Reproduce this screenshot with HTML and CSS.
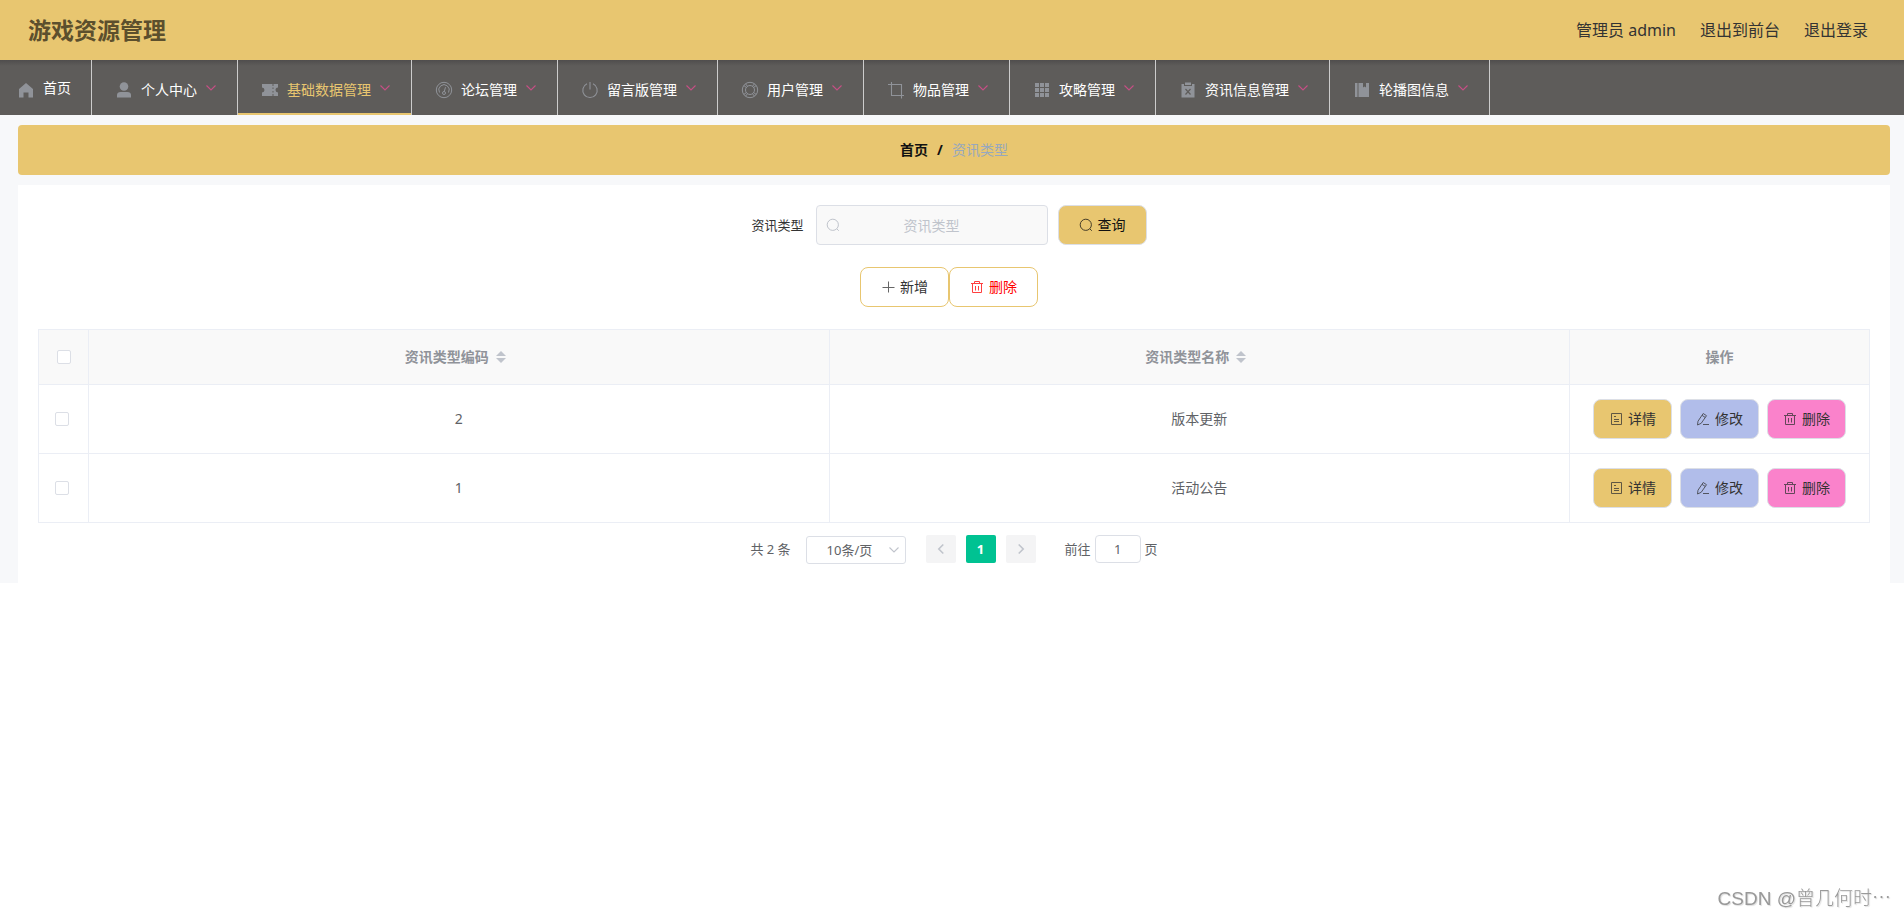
FILE: index.html
```html
<!DOCTYPE html>
<html lang="zh-CN">
<head>
<meta charset="utf-8">
<title>游戏资源管理</title>
<link rel="stylesheet" href="styles.css">
</head>
<body>
<svg class="sprite" aria-hidden="true">
  <symbol id="i-home" viewBox="0 0 18 18"><path fill="currentColor" d="M9 2 2 8v8.500h4.500V11.500h5v5H16V8z"/></symbol>
  <symbol id="i-user" viewBox="0 0 18 18"><circle fill="currentColor" cx="9" cy="5.500" r="4.300"/><path fill="currentColor" d="M2 16.500v-2.500c0-2 1.500-3 3.500-3h7c2 0 3.500 1 3.500 3v2.500z"/></symbol>
  <symbol id="i-ticket" viewBox="0 0 18 18"><path fill="currentColor" d="M1 3h10.500v2h1V3H17v3.500a2.500 2.500 0 0 0 0 5V15h-4.500v-2h-1v2H1v-3.500a2.500 2.500 0 0 0 0-5zM11.500 6.500v1.500h1V6.500zm0 3.500v1.500h1V10z"/></symbol>
  <symbol id="i-odometer" viewBox="0 0 18 18"><g fill="none" stroke="currentColor"><circle cx="9" cy="9" r="7.700"/><path d="M4.500 11.500A5.200 5.200 0 1 1 13.500 11.500M9.200 10.800l1.300-4.600"/><circle cx="9" cy="12" r="1.500"/></g></symbol>
  <symbol id="i-power" viewBox="0 0 18 18"><path fill="none" stroke="currentColor" stroke-width="1.100" d="M9 1v7.500M6 2.800a7.200 7.200 0 1 0 6 0"/></symbol>
  <symbol id="i-help" viewBox="0 0 18 18"><g fill="none" stroke="currentColor"><circle cx="9" cy="9" r="7.700"/><circle cx="9" cy="9" r="4.500"/><path d="M4.500 2.800l2 2.500M2.800 4.500l2.600 2M13.500 2.800l-2 2.500M15.200 4.500l-2.600 2M4.500 15.200l2-2.500M2.800 13.500l2.600-2M13.500 15.200l-2-2.500M15.200 13.500l-2.600-2"/></g></symbol>
  <symbol id="i-crop" viewBox="0 0 18 18"><path fill="none" stroke="currentColor" stroke-width="1.100" d="M4.500 1v13.500H17M1 3.500h13.500V17.500"/></symbol>
  <symbol id="i-grid" viewBox="0 0 18 18"><path fill="currentColor" d="M2 2h4v4H2zm5 0h4v4H7zm5 0h4v4h-4zM2 7h4v4H2zm5 0h4v4H7zm5 0h4v4h-4zM2 12h4v4H2zm5 0h4v4H7zm5 0h4v4h-4z"/></symbol>
  <symbol id="i-release" viewBox="0 0 18 18"><path fill="currentColor" d="M2.500 3H5v2h8V3h2.500v13.500h-13zM6 1.500h6V4H6z"/><path fill="none" stroke="#5e5c5a" stroke-width="1.200" d="M6.500 8l5 5.500M11.500 8l-5 5.500"/></symbol>
  <symbol id="i-book" viewBox="0 0 18 18"><path fill="currentColor" d="M2 2h2.500v14H2zM5.500 2H10v4.500l1.500-1L13 6.500V2h3v14H5.500z"/></symbol>
  <symbol id="i-down" viewBox="0 0 12 12"><path fill="none" stroke="currentColor" stroke-width="1.100" d="M1.500 3.500 6 8l4.500-4.500"/></symbol>
  <symbol id="i-left" viewBox="0 0 12 12"><path fill="none" stroke="currentColor" stroke-width="1.600" d="M8.300 1.500 3.800 6l4.500 4.500"/></symbol>
  <symbol id="i-right" viewBox="0 0 12 12"><path fill="none" stroke="currentColor" stroke-width="1.600" d="M3.700 1.500 8.200 6l-4.500 4.500"/></symbol>
  <symbol id="i-search" viewBox="0 0 14 14"><path fill="none" stroke="currentColor" d="M10.800 10.800 12.800 12.800"/><circle fill="none" stroke="currentColor" cx="6.800" cy="6.800" r="5.600"/></symbol>
  <symbol id="i-plus" viewBox="0 0 14 14"><path fill="none" stroke="currentColor" d="M7.500 1.500v11M1.500 7.500h12"/></symbol>
  <symbol id="i-trash" viewBox="0 0 14 14"><path fill="none" stroke="currentColor" d="M1 3.500h12M4.500 3.500v-2h5v2M2.500 3.500v9h9v-9M5.500 6v4.500M8.500 6v4.500"/></symbol>
  <symbol id="i-doc" viewBox="0 0 14 14"><path fill="none" stroke="currentColor" d="M2.500 1.500h10v11h-10zM5 4.500h2M5 7.500h5M5 9.500h5"/></symbol>
  <symbol id="i-edit" viewBox="0 0 14 14"><path fill="none" stroke="currentColor" d="M2 9.200 7.200 1.500l3.300 2.200L5.200 11.300 1.500 13zM6 3.300l3.300 2.200M7 12.500h6"/></symbol>
</svg>

<header class="topbar">
  <h1 class="brand">游戏资源管理</h1>
  <div class="account">
    <span>管理员 admin</span>
    <a href="#">退出到前台</a>
    <a href="#">退出登录</a>
  </div>
</header>

<nav class="nav">
  <a class="nav-item nav-home" href="#"><svg class="nav-icon"><use href="#i-home"/></svg><span class="nav-text">首页</span></a>
  <a class="nav-item" href="#"><svg class="nav-icon"><use href="#i-user"/></svg><span class="nav-text">个人中心</span><svg class="nav-arrow"><use href="#i-down"/></svg></a>
  <a class="nav-item active" href="#"><svg class="nav-icon"><use href="#i-ticket"/></svg><span class="nav-text">基础数据管理</span><svg class="nav-arrow"><use href="#i-down"/></svg></a>
  <a class="nav-item" href="#"><svg class="nav-icon"><use href="#i-odometer"/></svg><span class="nav-text">论坛管理</span><svg class="nav-arrow"><use href="#i-down"/></svg></a>
  <a class="nav-item" href="#"><svg class="nav-icon"><use href="#i-power"/></svg><span class="nav-text">留言版管理</span><svg class="nav-arrow"><use href="#i-down"/></svg></a>
  <a class="nav-item" href="#"><svg class="nav-icon"><use href="#i-help"/></svg><span class="nav-text">用户管理</span><svg class="nav-arrow"><use href="#i-down"/></svg></a>
  <a class="nav-item" href="#"><svg class="nav-icon"><use href="#i-crop"/></svg><span class="nav-text">物品管理</span><svg class="nav-arrow"><use href="#i-down"/></svg></a>
  <a class="nav-item" href="#"><svg class="nav-icon"><use href="#i-grid"/></svg><span class="nav-text">攻略管理</span><svg class="nav-arrow"><use href="#i-down"/></svg></a>
  <a class="nav-item" href="#"><svg class="nav-icon"><use href="#i-release"/></svg><span class="nav-text">资讯信息管理</span><svg class="nav-arrow"><use href="#i-down"/></svg></a>
  <a class="nav-item" href="#"><svg class="nav-icon"><use href="#i-book"/></svg><span class="nav-text">轮播图信息</span><svg class="nav-arrow"><use href="#i-down"/></svg></a>
</nav>

<main class="main">
  <div class="breadcrumb">
    <a href="#">首页</a><span class="slash">/</span><span class="current">资讯类型</span>
  </div>

  <section class="card">
    <form class="search">
      <label for="type">资讯类型</label>
      <div class="search-field">
        <svg class="field-icon"><use href="#i-search"/></svg>
        <input id="type" type="text" placeholder="资讯类型">
      </div>
      <button class="btn btn-query" type="button"><svg class="btn-icon"><use href="#i-search"/></svg>查询</button>
    </form>

    <div class="actions">
      <button class="btn btn-outline" type="button"><svg class="btn-icon"><use href="#i-plus"/></svg>新增</button>
      <button class="btn btn-outline btn-danger" type="button"><svg class="btn-icon"><use href="#i-trash"/></svg>删除</button>
    </div>

    <table class="table">
      <colgroup><col class="col-check"><col><col><col class="col-ops"></colgroup>
      <thead>
        <tr>
          <th class="check"><input type="checkbox" aria-label="全选"></th>
          <th><span class="sortable">资讯类型编码<span class="carets"><i class="up"></i><i class="down"></i></span></span></th>
          <th><span class="sortable">资讯类型名称<span class="carets"><i class="up"></i><i class="down"></i></span></span></th>
          <th>操作</th>
        </tr>
      </thead>
      <tbody>
        <tr>
          <td class="check"><input type="checkbox" aria-label="选择 2"></td>
          <td>2</td>
          <td>版本更新</td>
          <td><div class="ops">
            <button class="btn btn-row btn-view" type="button"><svg class="btn-icon"><use href="#i-doc"/></svg>详情</button>
            <button class="btn btn-row btn-edit" type="button"><svg class="btn-icon"><use href="#i-edit"/></svg>修改</button>
            <button class="btn btn-row btn-del" type="button"><svg class="btn-icon"><use href="#i-trash"/></svg>删除</button>
          </div></td>
        </tr>
        <tr>
          <td class="check"><input type="checkbox" aria-label="选择 1"></td>
          <td>1</td>
          <td>活动公告</td>
          <td><div class="ops">
            <button class="btn btn-row btn-view" type="button"><svg class="btn-icon"><use href="#i-doc"/></svg>详情</button>
            <button class="btn btn-row btn-edit" type="button"><svg class="btn-icon"><use href="#i-edit"/></svg>修改</button>
            <button class="btn btn-row btn-del" type="button"><svg class="btn-icon"><use href="#i-trash"/></svg>删除</button>
          </div></td>
        </tr>
      </tbody>
    </table>

    <div class="pagination">
      <span class="total">共 2 条</span>
      <div class="size">
        <select aria-label="每页条数"><option>10条/页</option></select>
        <svg class="size-arrow"><use href="#i-down"/></svg>
      </div>
      <div class="pager">
        <button type="button" aria-label="上一页" disabled><svg><use href="#i-left"/></svg></button>
        <button type="button" class="on">1</button>
        <button type="button" aria-label="下一页" disabled><svg><use href="#i-right"/></svg></button>
      </div>
      <label class="jump">前往<input type="text" value="1">页</label>
    </div>
  </section>
</main>
<div class="watermark">CSDN @曾几何时<span class="dots">…</span></div>
</body>
</html>
```
FILE: styles.css
```css
* {
  box-sizing: border-box;
}

body {
  margin: 0;
  background: #fff;
  color: #333;
  font: 14px/20px "Noto Sans", "Noto Sans CJK SC", sans-serif;
}

a {
  color: inherit;
  text-decoration: none;
}

button,
input,
select {
  font: inherit;
  color: inherit;
}

.sprite {
  position: absolute;
  width: 0;
  height: 0;
}

/* header */
.topbar {
  display: flex;
  align-items: center;
  justify-content: space-between;
  height: 60px;
  padding: 0 36px 0 28px;
  background: #e8c670;
}

.brand {
  margin: 0;
  color: #5c4f2d;
  font-size: 23px;
  line-height: 32px;
  font-weight: 700;
}

.account {
  display: flex;
  gap: 24px;
  font-size: 16px;
  line-height: 24px;
}

/* main menu */
.nav {
  display: flex;
  height: 55px;
  background: linear-gradient(#4f4d4d, #5e5c5a 6px);
  color: #fff;
}

.nav-item {
  display: flex;
  align-items: center;
  padding: 4px 20px 0;
  border-right: 1px solid #ccc;
  white-space: nowrap;
}

.nav-home {
  padding-left: 14px;
}

.nav-home .nav-text {
  padding-bottom: 4px;
}

.nav-item.active {
  color: #e8c670;
  box-shadow: inset 0 -2px #e8c670;
}

.nav-icon {
  width: 18px;
  height: 18px;
  margin: 0 8px 0 3px;
  color: #909399;
}

.nav-arrow {
  width: 12px;
  height: 16px;
  margin-left: 8px;
  padding-bottom: 4px;
  color: #c74f86;
}

/* page */
.main {
  padding: 10px 14px 0 18px;
  background: #f7f8fa;
}

.breadcrumb {
  display: flex;
  align-items: center;
  justify-content: center;
  height: 50px;
  margin-bottom: 10px;
  border-radius: 4px;
  background: #e8c670;
  color: #111;
  font-weight: 700;
}

.slash {
  margin: 0 9px;
}

.current {
  color: #97a8be;
  font-weight: 400;
}

.card {
  padding: 20px;
  background: #fff;
}

.search,
.actions {
  display: flex;
  align-items: center;
  justify-content: center;
  padding-right: 10px;
  margin-bottom: 22px;
}

.search label {
  padding-right: 12px;
  font-size: 13px;
}

.search-field {
  position: relative;
  width: 232px;
  margin-right: 10px;
}

.search-field input {
  display: block;
  width: 100%;
  height: 40px;
  padding: 0 30px;
  border: 1px solid #dcdfe6;
  border-radius: 4px;
  background: #f9f9f9;
  text-align: center;
}

.search-field input::placeholder {
  color: #c0c4cc;
}

.field-icon {
  position: absolute;
  left: 10px;
  top: 13px;
  width: 14px;
  height: 14px;
  color: #c0c4cc;
}

.btn {
  display: inline-flex;
  align-items: center;
  gap: 5px;
  height: 40px;
  padding: 0 20px;
  border: 1px solid #dcdfe6;
  border-radius: 8px;
  background: #fff;
  color: #333;
  white-space: nowrap;
}

.btn-icon {
  width: 14px;
  height: 14px;
  opacity: 0.75;
}

.btn-query {
  background: #e8c670;
  color: #111;
}

.btn-outline {
  border-color: #e8c670;
}

.btn-danger {
  color: #f00;
}

/* table */
.table {
  width: 100%;
  table-layout: fixed;
  border-collapse: separate;
  border-spacing: 0;
  border: solid #ebeef5;
  border-width: 1px 0 0 1px;
  color: #606266;
}

.col-check {
  width: 50px;
}

.col-ops {
  width: 300px;
}

.table th,
.table td {
  height: 69px;
  padding: 0;
  border: solid #ebeef5;
  border-width: 0 1px 1px 0;
  text-align: center;
}

.table th {
  height: 55px;
  background: #f9f9f9;
  color: #909399;
  font-weight: 700;
}

.table .check {
  padding-right: 4px;
}

.table th.check {
  padding-right: 0;
}

.check input {
  appearance: none;
  display: block;
  width: 14px;
  height: 14px;
  margin: 0 auto;
  border: 1px solid #dcdfe6;
  border-radius: 2px;
  background: #fff;
}

.sortable {
  display: inline-flex;
  align-items: center;
}

.carets {
  display: flex;
  flex-direction: column;
  align-items: center;
  gap: 2px;
  width: 24px;
}

.carets i {
  border: 5px solid transparent;
}

.carets .up {
  border-top: 0;
  border-bottom-color: #c0c4cc;
}

.carets .down {
  border-bottom: 0;
  border-top-color: #c0c4cc;
}

.ops {
  display: flex;
  justify-content: center;
  gap: 8px;
}

.btn-row {
  padding: 0 15px;
}

.btn-view {
  background: #e8c670;
}

.btn-edit {
  background: #b1bdea;
}

.btn-del {
  background: #fa82cb;
}

/* pagination */
.pagination {
  display: flex;
  align-items: center;
  justify-content: center;
  height: 28px;
  margin-top: 12px;
  color: #606266;
  font-size: 13px;
}

.size {
  position: relative;
  width: 100px;
  margin: 2px 20px 0 15px;
}

.size select {
  appearance: none;
  display: block;
  width: 100%;
  height: 28px;
  padding: 0 30px 0 20px;
  border: 1px solid #dcdfe6;
  border-radius: 3px;
  background: #fff;
}

.size-arrow {
  position: absolute;
  right: 6px;
  top: 8px;
  width: 12px;
  height: 12px;
  color: #c0c4cc;
  pointer-events: none;
}

.pager {
  display: flex;
  gap: 10px;
}

.pager button {
  display: flex;
  align-items: center;
  justify-content: center;
  width: 30px;
  height: 28px;
  padding: 0;
  border: 0;
  border-radius: 2px;
  background: #f4f4f5;
  color: #c0c4cc;
  font-weight: 700;
}

.pager svg {
  width: 12px;
  height: 12px;
}

.pager .on {
  background: #00c292;
  color: #fff;
}

.jump {
  display: flex;
  align-items: center;
  margin-left: 29px;
}

.jump input {
  width: 46px;
  height: 28px;
  margin: 0 4px;
  padding: 0;
  border: 1px solid #dcdfe6;
  border-radius: 4px;
  background: #fff;
  text-align: center;
}

.watermark {
  position: fixed;
  right: 13px;
  bottom: 4px;
  color: #999;
  font: 300 19px/30px "Liberation Sans", "Noto Sans CJK SC", sans-serif;
  text-shadow: 1px 1px 1px #ddd;
}

.dots {
  font-family: "Noto Sans CJK SC", sans-serif;
}
```
